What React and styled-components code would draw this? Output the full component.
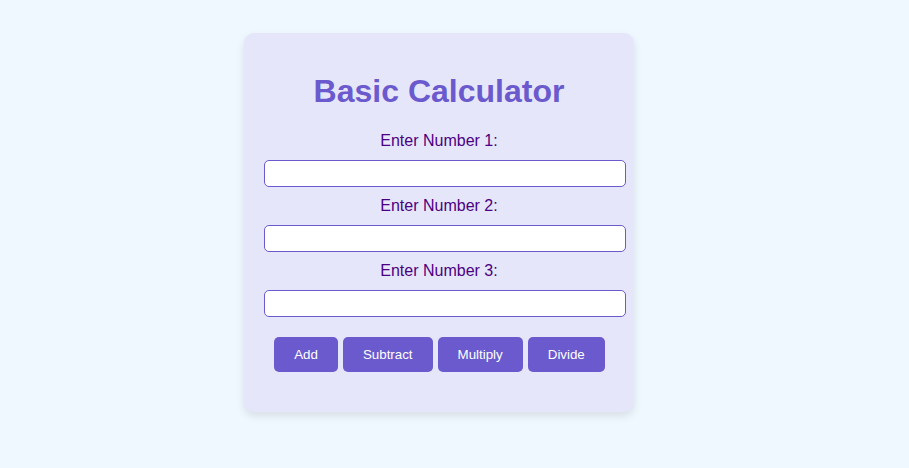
import React, { useState } from 'react';
import styled, { createGlobalStyle } from 'styled-components';

const GlobalStyle = createGlobalStyle`
  html, body {
    margin: 0;
    padding: 0;
    background: #f0f8ff;
    font-family: "Liberation Sans", Arial, sans-serif;
  }
`;

const Page = styled.div`
  display: flex;
  justify-content: center;
  align-items: flex-start;
  min-height: 468px;
  padding: 33px 31px 0 0;
  box-sizing: border-box;
`;

const Card = styled.div`
  width: 350px;
  padding: 20px;
  background: #e6e6fa;
  border-radius: 10px;
  box-shadow: 0 4px 8px rgba(0, 0, 0, 0.1);
  text-align: center;
`;

const Title = styled.h1`
  margin: 20px 0 22px;
  font-size: 32px;
  font-weight: bold;
  color: #6a5acd;
`;

const Label = styled.label`
  display: block;
  margin-bottom: 10px;
  font-size: 16px;
  line-height: 18px;
  color: #4b0082;
`;

const Input = styled.input`
  display: block;
  width: 100%;
  height: 15px;
  margin: 0 0 10px;
  padding: 5px;
  box-sizing: content-box;
  border: 1px solid #6a5acd;
  border-radius: 5px;
  background: #fff;
  font-family: "Liberation Sans", Arial, sans-serif;
  font-size: 13.33px;
  outline: none;
`;

const Buttons = styled.div`
  display: flex;
  justify-content: center;
  gap: 5px;
  margin: 20px 0;
  padding-left: 1px;
`;

const Button = styled.button`
  padding: 10px 20px;
  border: none;
  border-radius: 5px;
  background: #6a5acd;
  color: #fff;
  font-family: "Liberation Sans", Arial, sans-serif;
  font-size: 13.33px;
  line-height: 15px;
  cursor: pointer;
`;

const fields = ['Enter Number 1:', 'Enter Number 2:', 'Enter Number 3:'];
const ops = ['Add', 'Subtract', 'Multiply', 'Divide'];

export default function App() {
  const [values, setValues] = useState(['', '', '']);

  const update = (i, v) => {
    const next = [...values];
    next[i] = v;
    setValues(next);
  };

  return (
    <>
      <GlobalStyle />
      <Page>
        <Card>
          <Title>Basic Calculator</Title>
          {fields.map((f, i) => (
            <div key={f}>
              <Label htmlFor={`num${i + 1}`}>{f}</Label>
              <Input
                id={`num${i + 1}`}
                type='number'
                value={values[i]}
                onChange={e => update(i, e.target.value)}
              />
            </div>
          ))}
          <Buttons>
            {ops.map(op => <Button key={op}>{op}</Button>)}
          </Buttons>
        </Card>
      </Page>
    </>
  );
}
